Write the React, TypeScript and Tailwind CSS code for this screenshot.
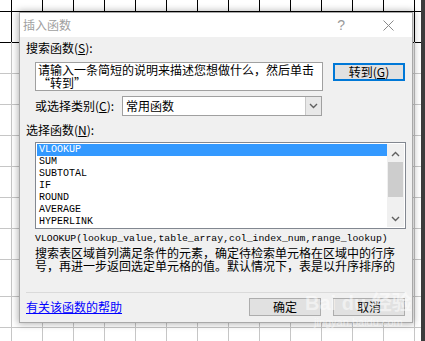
import React from 'react';

const cols = Array.from({ length: 14 }, (_, i) => 11 + 31 * i);
const rows = [11, 42, 73, 104, 135, 166, 197, 228, 259, 296, 327];
const functions = ['VLOOKUP', 'SUM', 'SUBTOTAL', 'IF', 'ROUND', 'AVERAGE', 'HYPERLINK'];

const SheetGrid: React.FC = () => (
  <svg className="absolute inset-0" width={425} height={341} shapeRendering="crispEdges">
    {rows.map((y) => (
      <line key={'h' + y} x1={0} x2={425} y1={y + 0.5} y2={y + 0.5} stroke={y <= 42 ? '#000' : '#c6c6c6'} />
    ))}
    {cols.map((x) => (
      <g key={'v' + x}>
        <line x1={x + 0.5} x2={x + 0.5} y1={42} y2={341} stroke="#c6c6c6" />
        <line x1={x + 0.5} x2={x + 0.5} y1={0} y2={42} stroke="#000" />
      </g>
    ))}
    <rect x={421} y={0} width={4} height={341} fill="#3c3c3c" />
  </svg>
);

const Chevron: React.FC<{ up?: boolean }> = ({ up }) => (
  <svg width="9" height="6" viewBox="0 0 9 6">
    <path d={up ? 'M1 5 L4.5 1.5 L8 5' : 'M1 1 L4.5 4.5 L8 1'} fill="none" stroke="#606060" strokeWidth="1.4" />
  </svg>
);

const App: React.FC = () => {
  const cjk = "font-['Noto_Sans_CJK_SC','Microsoft_YaHei',sans-serif]";
  const mono = "font-['Liberation_Mono','Noto_Sans_CJK_SC',monospace]";
  const btn = "flex items-center justify-center w-[72px] h-[18px] bg-[#e1e1e1] text-[12px] text-black";

  return (
    <div className={`relative w-[425px] h-[341px] overflow-hidden bg-white ${cjk}`}>
      <SheetGrid />

      {/* dialog window */}
      <div className="absolute left-[19px] top-[12px] w-[394px] h-[311px] flex flex-col border border-[#a8a8a8] bg-[#f0f0f0] shadow-[0_0_7px_1px_rgba(0,0,0,0.3)]">
        <div className="h-[24px] shrink-0 bg-white flex items-center pl-[3px] text-[12px] text-[#a0a0a0]">
          <span className="leading-none">插入函数</span>
          <span className="ml-auto text-[14px] leading-none text-[#9a9a9a] font-['Liberation_Sans',sans-serif]">?</span>
          <svg className="ml-[38px] mr-[18px]" width="11" height="11" viewBox="0 0 11 11">
            <path d="M0.5 0.5 L10.5 10.5 M10.5 0.5 L0.5 10.5" stroke="#8a8a8a" strokeWidth="1" />
          </svg>
        </div>

        <div className="flex-1 flex flex-col pt-[4px] pl-[6px] pr-[7px] text-[12px] text-black">
          <div className="h-[14px] leading-[14px]">
            搜索函数(<span className="underline">S</span>):
          </div>

          <div className="mt-[7px] flex items-start">
            <div className="ml-[9px] w-[288px] h-[29px] flex flex-col bg-white border border-[#a0a0a0] pl-[2px] whitespace-nowrap">
              <span className="h-[13px] leading-[14px]">请输入一条简短的说明来描述您想做什么，然后单击</span>
              <span className="h-[14px] leading-[14px]">“转到”</span>
            </div>
            <div className={`ml-[10px] mt-[1px] border-2 border-[#0078d7] ${btn}`}>
              转到(<span className="underline">G</span>)
            </div>
          </div>

          <div className="mt-[5px] flex items-center">
            <div className="ml-[9px] w-[87px] leading-[14px]">
              或选择类别(<span className="underline">C</span>):
            </div>
            <div className="w-[200px] h-[20px] flex bg-white border border-[#a0a0a0]">
              <span className="flex-1 pl-[3px] leading-[18px]">常用函数</span>
              <span className="w-[16px] flex items-center justify-center bg-[#e8e8e8] border-l border-[#c8c8c8]">
                <Chevron />
              </span>
            </div>
          </div>

          <div className="mt-[7px] h-[14px] leading-[14px]">
            选择函数(<span className="underline">N</span>):
          </div>

          <div className="mt-[5px] ml-[9px] w-[371px] h-[87px] flex bg-white border border-[#828790] p-[1px]">
            <ul className={`flex-1 ${mono} text-[10px]`}>
              {functions.map((f, i) => (
                <li
                  key={f}
                  className={`h-[12px] leading-[12px] pl-[2px] ${i === 0 ? 'bg-[#3399ff] text-white' : 'text-black'}`}
                >
                  {f}
                </li>
              ))}
            </ul>
            <div className="w-[17px] flex flex-col bg-[#f0f0f0]">
              <div className="h-[17px] flex items-center justify-center pt-[3px]">
                <Chevron up />
              </div>
              <div className="mt-[1px] mx-[1px] h-[35px] bg-[#cdcdcd]" />
              <div className="mt-auto h-[17px] flex items-center justify-center pt-[1px]">
                <Chevron />
              </div>
            </div>
          </div>

          <div className={`mt-[4px] ml-[9px] h-[12px] leading-[12px] ${mono} text-[9.8px] whitespace-nowrap`}>
            VLOOKUP(lookup_value,table_array,col_index_num,range_lookup)
          </div>

          <div className="mt-[1px] ml-[9px] flex flex-col whitespace-nowrap">
            <span className="h-[13px] leading-[14px]">搜索表区域首列满足条件的元素，确定待检索单元格在区域中的行序</span>
            <span className="h-[13px] leading-[14px]">号，再进一步返回选定单元格的值。默认情况下，表是以升序排序的</span>
          </div>

          <div className="mt-[20px] h-px bg-[#dadada]" />

          <div className="mt-[5px] flex items-center">
            <span className="text-[#0000ff] underline leading-[14px]">有关该函数的帮助</span>
            <div className={`ml-auto border border-[#adadad] ${btn}`}>确定</div>
            <div className={`ml-[12px] border border-[#adadad] ${btn}`}>取消</div>
          </div>
        </div>
      </div>

      {/* watermark */}
      <div className="absolute left-[305px] top-[290px] flex flex-col items-center text-white/50 pointer-events-none">
        <span className="text-[20px] font-bold leading-[26px] font-['Liberation_Sans','Noto_Sans_CJK_SC',sans-serif]">Bai du 经验</span>
        <span className="text-[11px] leading-[12px] font-['Liberation_Sans',sans-serif]">jingyan.baidu.com</span>
      </div>
    </div>
  );
};

export default App;
